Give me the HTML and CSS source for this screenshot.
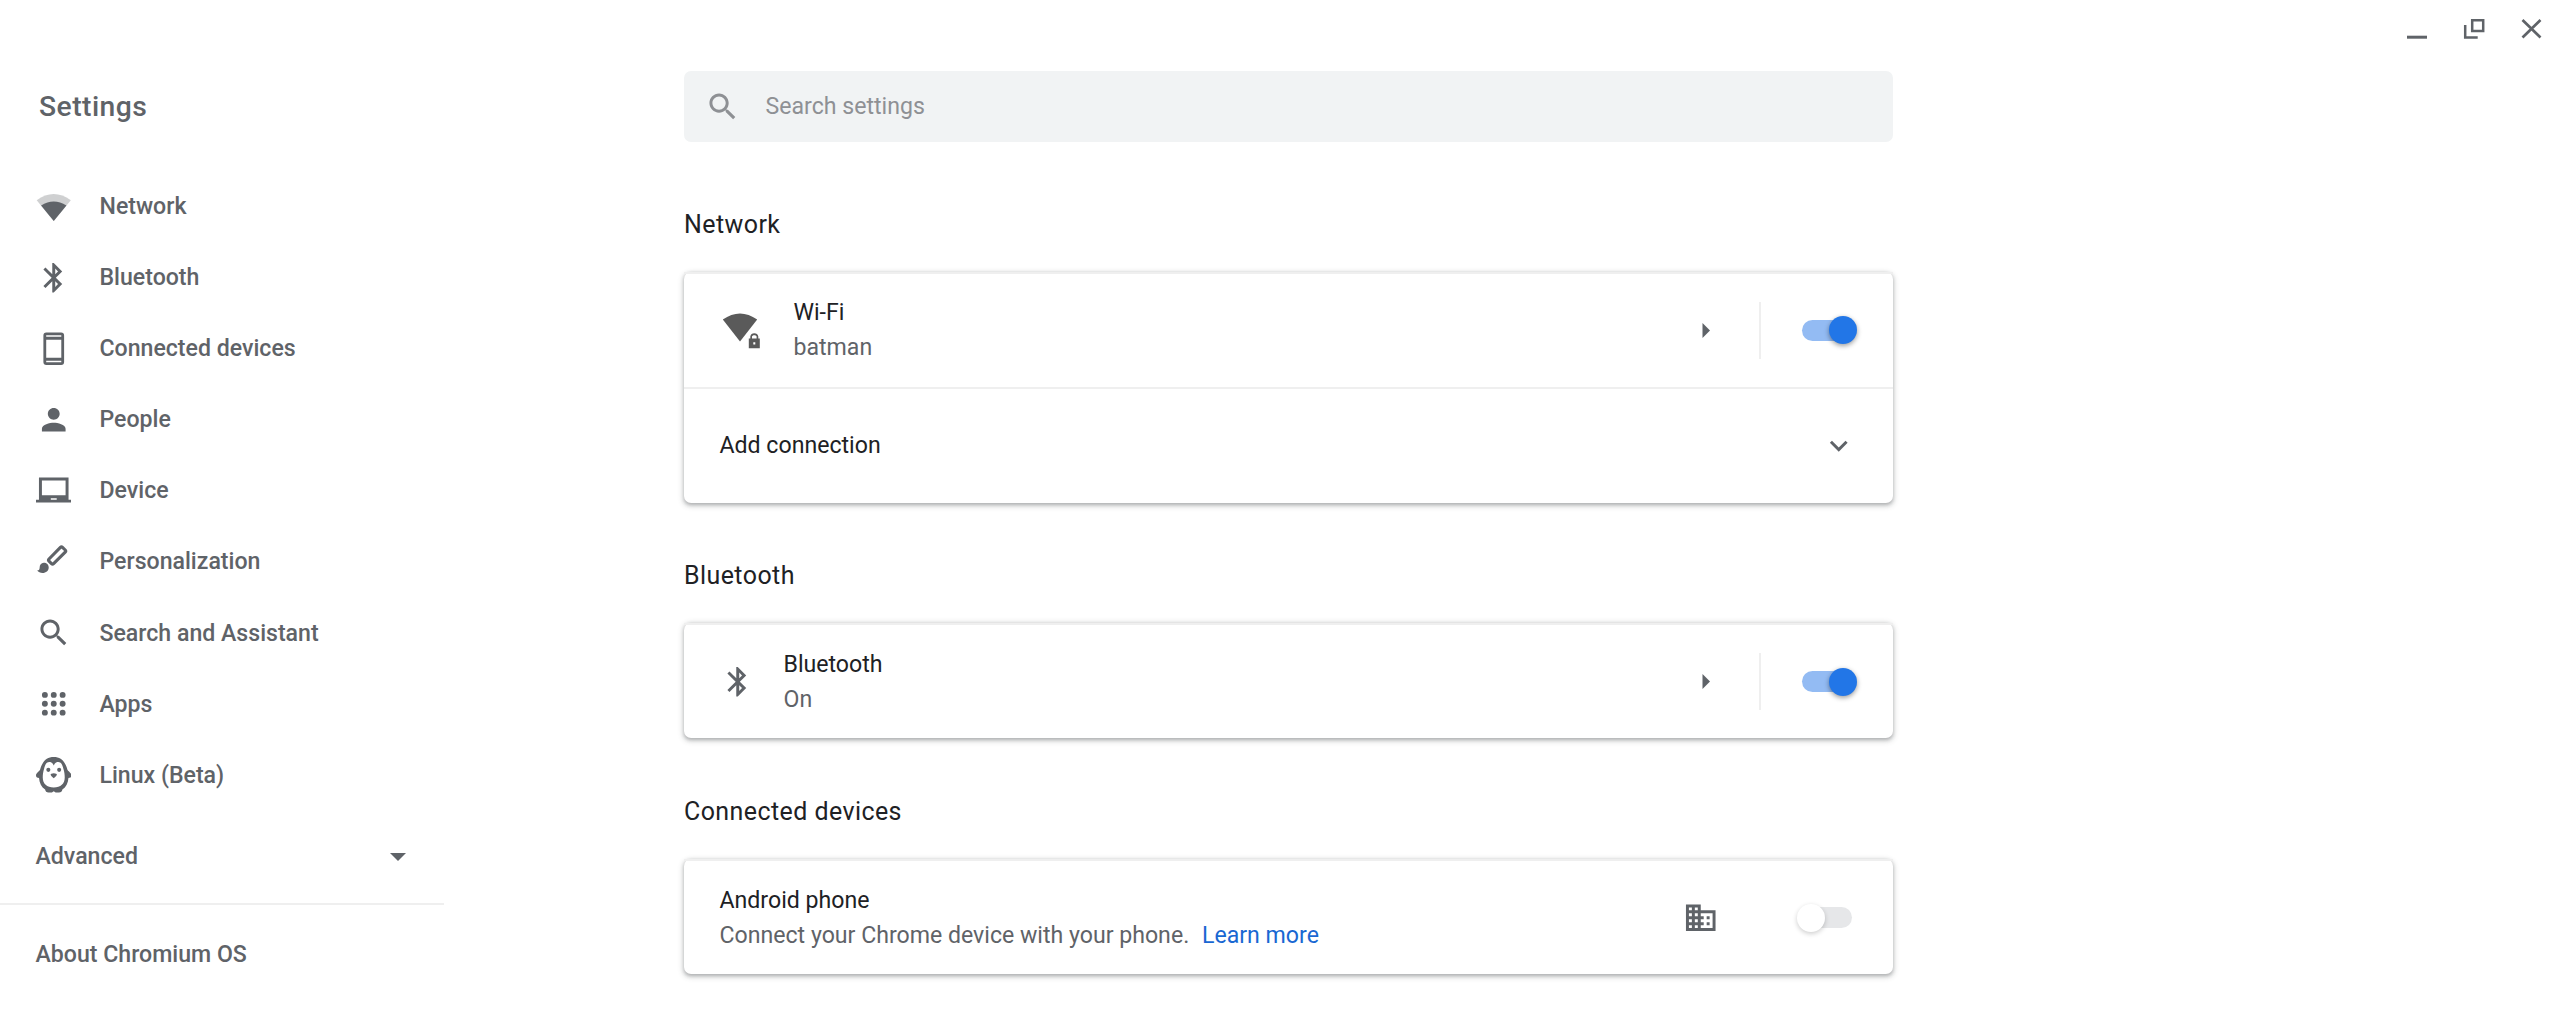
FILE: index.html
```html
<!DOCTYPE html>
<html lang="en">
<head>
<meta charset="utf-8">
<title>Settings</title>
<link rel="stylesheet" href="styles.css">
</head>
<body>
<header class="window-bar">
  <svg class="window-button" viewBox="0 0 57 57"><path d="M19 37.200h20" stroke-width="3"/></svg>
  <svg class="window-button" viewBox="0 0 57 57"><path d="M27.200 20.300h11v10.600h-11zM20.200 25v12.500H32.700" stroke-width="2.500"/></svg>
  <svg class="window-button" viewBox="0 0 57 57"><path d="M20.500 20l18 17.500M38.500 20l-18 17.500" stroke-width="2.700"/></svg>
</header>
<div class="page">
  <aside class="sidebar">
    <h1 class="app-title">Settings</h1>
    <nav class="menu">
      <a class="menu-item"><svg class="icon" viewBox="0 0 105 105"><path opacity=".3" d="M2 33Q52.500-3 103 33L52.500 95z"/><path d="M15 49Q52.500 25 90 49L52.500 95z"/></svg>Network</a>
      <a class="menu-item"><svg class="icon" viewBox="0 0 24 24"><path d="M17.710 7.710L12 2h-1v7.590L6.410 5 5 6.410 10.590 12 5 17.590 6.410 19 11 14.410V22h1l5.710-5.710-4.300-4.290 4.300-4.290zM13 5.830l1.880 1.880L13 9.590V5.830zm1.880 10.460L13 18.170v-3.760l1.880 1.880z"/></svg>Bluetooth</a>
      <a class="menu-item"><svg class="icon" viewBox="0 0 24 24"><path fill-rule="evenodd" d="M7 1h10a2 2 0 0 1 2 2v18a2 2 0 0 1-2 2H7a2 2 0 0 1-2-2V3a2 2 0 0 1 2-2zM6.900 2.900v1h10.200v-1zM6.900 5.900v12.200h10.200V5.900zM6.900 20.100v1h10.200v-1z"/></svg>Connected devices</a>
      <a class="menu-item"><svg class="icon" viewBox="0 0 24 24"><path d="M12 12c2.210 0 4-1.790 4-4s-1.790-4-4-4-4 1.790-4 4 1.790 4 4 4zm0 2c-2.670 0-8 1.340-8 4v2h16v-2c0-2.660-5.330-4-8-4z"/></svg>People</a>
      <a class="menu-item"><svg class="icon" viewBox="0 0 24 24"><path d="M22 18V3H2v15H0v2h24v-2h-2zm-8 0h-4v-1h4v1zm6-3H4V5h16v10z"/></svg>Device</a>
      <a class="menu-item"><svg class="icon" viewBox="0 0 35.500 35.500"><path d="M24.400 3.300a1.500 1.500 0 0 1 2.100 0l2.700 2.700a1.500 1.500 0 0 1 0 2.100L17.600 19.600a1.500 1.500 0 0 1-2.100 0l-2.500-2.500a1.500 1.500 0 0 1 0-2.100z" fill="none" stroke="currentColor" stroke-width="3.100"/><path d="M7.700 18.700c3 0 5 2.100 5 4.700 0 3.200-2.700 5.500-6.200 5.500-2.200 0-4.200-.9-5.300-2.500 1.500 0 2.400-.8 2.400-2.500 0-3 1.600-5.200 4.100-5.200z"/></svg>Personalization</a>
      <a class="menu-item"><svg class="icon" viewBox="0 0 24 24"><path d="M15.500 14h-.79l-.28-.27C15.410 12.590 16 11.110 16 9.500 16 5.910 13.090 3 9.500 3S3 5.910 3 9.500 5.910 16 9.500 16c1.610 0 3.090-.59 4.230-1.570l.27.28v.79l5 4.990L20.490 19l-4.990-5zm-6 0C7.010 14 5 11.990 5 9.500S7.010 5 9.500 5 14 7.010 14 9.500 11.990 14 9.500 14z"/></svg>Search and Assistant</a>
      <a class="menu-item"><svg class="icon" viewBox="0 0 24 24"><g><circle cx="6" cy="6" r="2"/><circle cx="12" cy="6" r="2"/><circle cx="18" cy="6" r="2"/><circle cx="6" cy="12" r="2"/><circle cx="12" cy="12" r="2"/><circle cx="18" cy="12" r="2"/><circle cx="6" cy="18" r="2"/><circle cx="12" cy="18" r="2"/><circle cx="18" cy="18" r="2"/></g></svg>Apps</a>
      <a class="menu-item"><svg class="icon" viewBox="0 0 105 105"><path fill-rule="evenodd" d="M52.500 0C75 0 87 15 93 38c2 5 12 9 12 17 0 6-5 7-9 7-1 15-7 27-18 34-1 5-4 9-10 9H58l-5.500-4-5.500 4H37c-6 0-9-4-10-9C16 89 10 77 9 62c-4 0-9-1-9-7 0-8 10-12 12-17C18 15 30 0 52.500 0zM52.500 25C49 17 45 15 39 15c-8 0-12 8-15 20-3 9-4 17-4 26 0 19 12 29 32.500 29S85 80 85 61c0-9-1-17-4-26-3-12-7-20-15-20-6 0-10 2-13.500 10z"/><circle cx="36.500" cy="38" r="6"/><circle cx="68.500" cy="38" r="6"/><path d="M43 52q0-3 9.500-4 9.500 1 9.500 4 0 3-9.500 11Q43 55 43 52z"/></svg>Linux (Beta)</a>
    </nav>
    <a class="advanced">Advanced<svg class="caret" viewBox="0 0 16 8"><path d="M0 0h16L8 8z"/></svg></a>
    <a class="about">About Chromium OS</a>
  </aside>
  <main class="content">
    <div class="search"><svg class="icon" viewBox="0 0 24 24"><path d="M15.500 14h-.79l-.28-.27C15.410 12.590 16 11.110 16 9.500 16 5.910 13.090 3 9.500 3S3 5.910 3 9.500 5.910 16 9.500 16c1.610 0 3.090-.59 4.230-1.570l.27.28v.79l5 4.990L20.490 19l-4.990-5zm-6 0C7.010 14 5 11.990 5 9.500S7.010 5 9.500 5 14 7.010 14 9.500 11.990 14 9.500 14z"/></svg><span>Search settings</span></div>
    <section class="section">
      <h2 class="section-title">Network</h2>
      <div class="card">
        <div class="row row-wifi">
          <svg class="wifi-icon" viewBox="0 0 42 42"><path d="M3.800 10.500Q21-1.500 38.200 10.500L21 32.500z"/><path fill-rule="evenodd" d="M29.800 29.500h1.500v-2a4.100 4.100 0 0 1 8 0v2h1.500v9.800h-11zM33 29.500h4.600v-1.800c0-2-4.600-2-4.600 0zM34.300 33.300v2.200h2v-2.200z"/></svg>
          <div class="row-text"><div>Wi-Fi</div><div class="secondary">batman</div></div>
          <svg class="arrow" viewBox="0 0 8 15"><path d="M.500 0v15L8 7.500z"/></svg>
          <div class="separator"></div>
          <div class="toggle toggle-on"><div class="knob"></div></div>
        </div>
        <div class="row row-expand">
          <div class="row-text">Add connection</div>
          <svg class="icon" viewBox="0 0 24 24"><path d="M16.590 8.590L12 13.170 7.410 8.590 6 10l6 6 6-6z"/></svg>
        </div>
      </div>
    </section>
    <section class="section">
      <h2 class="section-title">Bluetooth</h2>
      <div class="card">
        <div class="row row-bluetooth">
          <svg class="icon" viewBox="0 0 24 24"><path d="M17.710 7.710L12 2h-1v7.590L6.410 5 5 6.410 10.590 12 5 17.590 6.410 19 11 14.410V22h1l5.710-5.710-4.300-4.290 4.300-4.290zM13 5.830l1.880 1.880L13 9.590V5.830zm1.880 10.460L13 18.170v-3.760l1.880 1.880z"/></svg>
          <div class="row-text"><div>Bluetooth</div><div class="secondary">On</div></div>
          <svg class="arrow" viewBox="0 0 8 15"><path d="M.500 0v15L8 7.500z"/></svg>
          <div class="separator"></div>
          <div class="toggle toggle-on"><div class="knob"></div></div>
        </div>
      </div>
    </section>
    <section class="section section-devices">
      <h2 class="section-title">Connected devices</h2>
      <div class="card">
        <div class="row">
          <div class="row-text"><div>Android phone</div><div class="secondary">Connect your Chrome device with your phone. <a class="link">Learn more</a></div></div>
          <svg class="icon policy" viewBox="0 0 24 24"><path d="M12 7V3H2v18h20V7H12zM6 19H4v-2h2v2zm0-4H4v-2h2v2zm0-4H4V9h2v2zm0-4H4V5h2v2zm4 12H8v-2h2v2zm0-4H8v-2h2v2zm0-4H8V9h2v2zm0-4H8V5h2v2zm10 12h-8v-2h2v-2h-2v-2h2v-2h-2V9h8v10zm-2-8h-2v2h2v-2zm0 4h-2v2h2v-2z"/></svg>
          <div class="toggle"><div class="knob"></div></div>
        </div>
      </div>
    </section>
  </main>
</div>
</body>
</html>
```
FILE: styles.css
```css
* { box-sizing: border-box; }
body {
  margin: 0;
  height: 1024px;
  overflow: hidden;
  background: #fff;
  color: #202124;
  font: 23.11px/35px Roboto, sans-serif;
}
svg { flex: none; fill: currentColor; }
.window-bar { display: flex; justify-content: flex-end; height: 57px; color: #5f6368; }
.window-button { width: 57px; height: 57px; fill: none; stroke: currentColor; }
.page { display: flex; align-items: flex-start; }
.sidebar { width: 444px; color: #5f6368; font-weight: 500; }
.app-title { margin: 32px 0 46px 39px; font-size: 28.3px; line-height: 36px; font-weight: 500; letter-spacing: .44px; }
.menu-item { display: flex; align-items: center; gap: 28.500px; height: 71.080px; padding-left: 35.500px; }
.icon { width: 35.500px; height: 35.500px; }
.advanced {
  display: flex;
  align-items: center;
  justify-content: space-between;
  height: 94px;
  padding: 0 38px 0 35.500px;
  border-bottom: 2px solid #efefef;
}
.caret { width: 16px; height: 8px; }
.about { display: block; padding: 32px 0 0 35.500px; }
.content { width: 1209px; margin: 14px 0 0 240px; }
.search {
  display: flex;
  align-items: center;
  gap: 25px;
  height: 71px;
  padding-left: 21px;
  border-radius: 7px;
  background: #f1f3f4;
  color: #8e9094;
}
.section-title { margin: 65px 0 29px; font-size: 24.96px; line-height: 36px; font-weight: 400; letter-spacing: .44px; }
.section + .section .section-title { margin-top: 55px; }
.section + .section-devices .section-title { margin-top: 56px; }
.card {
  border-radius: 7px;
  box-shadow: 0 1.780px 3.550px rgba(60, 64, 67, .3), 0 1.780px 5.330px 1.780px rgba(60, 64, 67, .15);
}
.row { display: flex; align-items: center; height: 115px; padding: 0 41px 0 35.500px; border-top: 2px solid #efefef; }
.row-wifi { padding-bottom: 1px; }
.row-expand { height: 116px; padding-right: 37px; padding-bottom: 1px; }
.row-text { flex: 1; }
.secondary, .row .icon, .arrow { color: #5f6368; }
.wifi-icon { width: 42px; height: 42px; margin: 0 33px 0 -1px; color: #5a5a5a; }
.row-bluetooth .icon { margin-right: 28.500px; }
.arrow { width: 8px; height: 15px; margin-right: 49px; }
.separator { width: 2px; height: 57px; margin-right: 41px; background: #efefef; }
.toggle { display: flex; align-items: center; width: 50px; height: 21px; border-radius: 11px; background: #e6e7e9; }
.knob {
  flex: none;
  width: 28px;
  height: 28px;
  margin-left: -5px;
  border-radius: 50%;
  background: #fff;
  box-shadow: 0 1.780px 5px rgba(0, 0, 0, .2);
}
.toggle-on { justify-content: flex-end; background: #93bbf3; }
.toggle-on .knob { margin: 0 -5px 0 0; background: #2276e7; box-shadow: 0 1.780px 5px rgba(0, 0, 0, .4); }
.policy { margin-right: 84px; }
.link { margin-left: 7px; color: #1967d2; }
```
